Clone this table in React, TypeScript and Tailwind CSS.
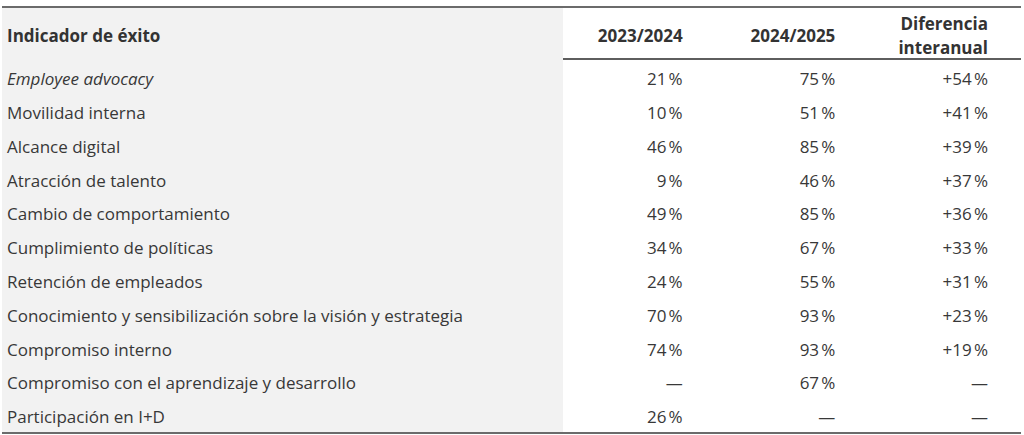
const rows: { label: string; a: string; b: string; d: string; italic?: boolean }[] = [
  { label: "Employee advocacy", a: "21\u202F%", b: "75\u202F%", d: "+54\u202F%", italic: true },
  { label: "Movilidad interna", a: "10\u202F%", b: "51\u202F%", d: "+41\u202F%" },
  { label: "Alcance digital", a: "46\u202F%", b: "85\u202F%", d: "+39\u202F%" },
  { label: "Atracción de talento", a: "9\u202F%", b: "46\u202F%", d: "+37\u202F%" },
  { label: "Cambio de comportamiento", a: "49\u202F%", b: "85\u202F%", d: "+36\u202F%" },
  { label: "Cumplimiento de políticas", a: "34\u202F%", b: "67\u202F%", d: "+33\u202F%" },
  { label: "Retención de empleados", a: "24\u202F%", b: "55\u202F%", d: "+31\u202F%" },
  { label: "Conocimiento y sensibilización sobre la visión y estrategia", a: "70\u202F%", b: "93\u202F%", d: "+23\u202F%" },
  { label: "Compromiso interno", a: "74\u202F%", b: "93\u202F%", d: "+19\u202F%" },
  { label: "Compromiso con el aprendizaje y desarrollo", a: "—", b: "67\u202F%", d: "—" },
  { label: "Participación en I+D", a: "26\u202F%", b: "—", d: "—" },
];

export default function App() {
  return (
    <div className="bg-white w-[1024px] h-[435px] pt-[6px] pl-[2px] text-[#383838]" style={{ fontFamily: '"Open Sans", "Noto Sans", sans-serif' }}>
      <div className="w-[1019px] border-t-2 border-b-2 border-[#6b6b6b]">
        <div className="grid grid-cols-[561px_1fr_1fr_1fr] border-b-2 border-[#5e5e5e] h-[52px] font-bold text-[17px] text-[#333]">
          <div className="bg-[#f2f2f2] flex items-center pl-[5px] pt-[4px]">Indicador de éxito</div>
          <div className="flex items-center justify-end pr-[33px] pt-[4px]">2023/2024</div>
          <div className="flex items-center justify-end pr-[33px] pt-[4px]">2024/2025</div>
          <div className="flex flex-col justify-center items-end pr-[33px] pt-[4px] leading-[24px] text-right">
            <span>Diferencia</span>
            <span>interanual</span>
          </div>
        </div>
        {rows.map((r) => (
          <div key={r.label} className="grid grid-cols-[561px_1fr_1fr_1fr] h-[33.8px] text-[17px]">
            <div className={"bg-[#f2f2f2] flex items-center pl-[5px] pt-[4px] " + (r.italic ? "italic" : "")}>{r.label}</div>
            <div className="flex items-center justify-end pr-[33px] pt-[4px]">{r.a}</div>
            <div className="flex items-center justify-end pr-[33px] pt-[4px]">{r.b}</div>
            <div className="flex items-center justify-end pr-[33px] pt-[4px]">{r.d}</div>
          </div>
        ))}
      </div>
    </div>
  );
}
